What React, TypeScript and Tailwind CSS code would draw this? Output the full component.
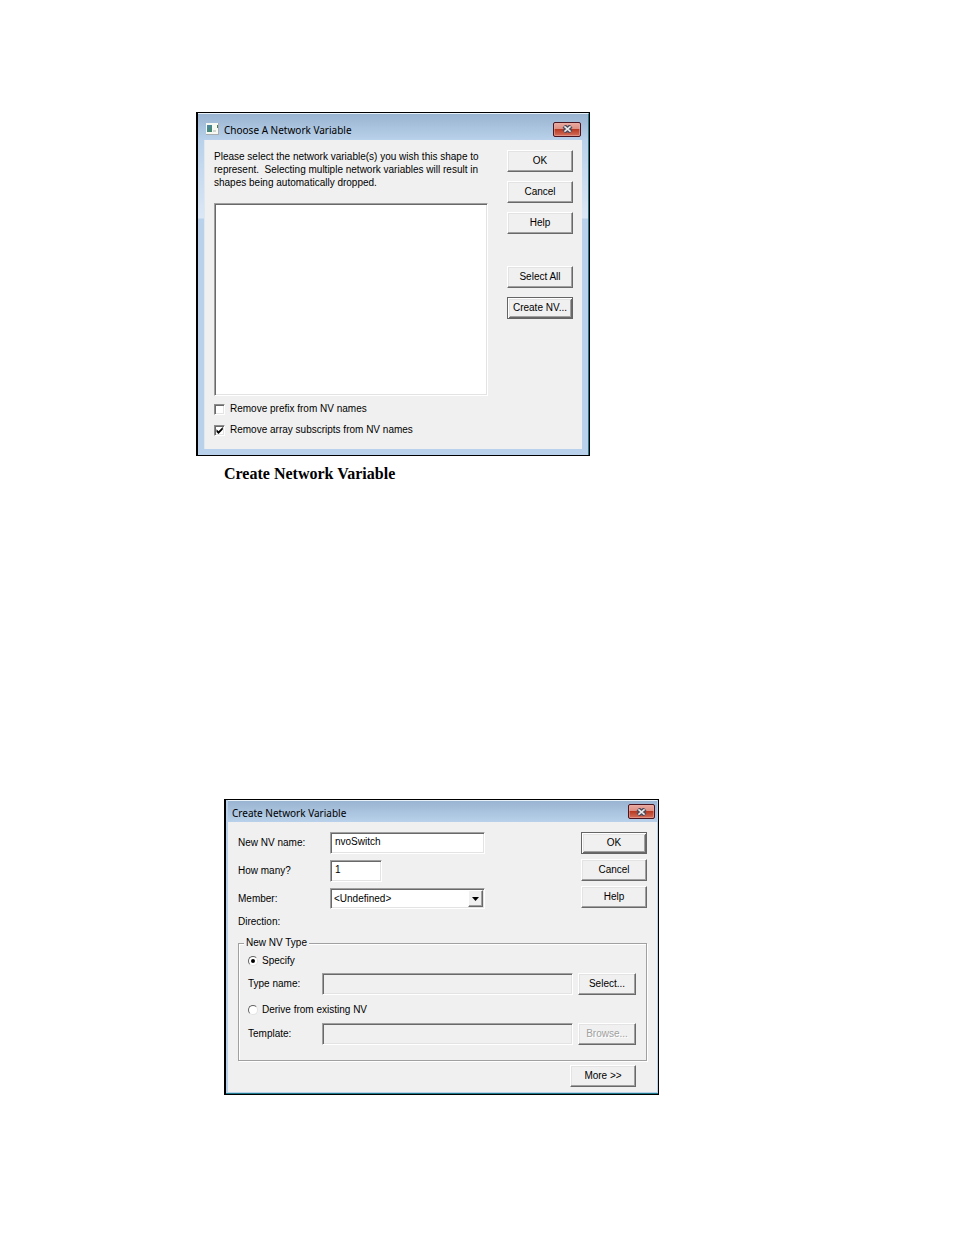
import React from "react";

interface DialogButtonProps {
  children: React.ReactNode;
  isDefault?: boolean;
  disabled?: boolean;
  className?: string;
}

function DialogButton({ children, isDefault, disabled, className = "w-[66px]" }: DialogButtonProps) {
  const bevel = isDefault
    ? "border-[#646464] shadow-[inset_1px_1px_#ffffff,inset_-1px_-1px_#696969,inset_2px_2px_#e3e3e3,inset_-2px_-2px_#a0a0a0]"
    : "border-t-white border-l-white border-r-[#696969] border-b-[#696969] shadow-[inset_-1px_-1px_#a0a0a0,inset_1px_1px_#e3e3e3]";
  return (
    <button
      type="button"
      disabled={disabled}
      className={`h-[22px] shrink-0 border bg-[#f0f0f0] text-center leading-5 disabled:text-[#a0a0a0] disabled:[text-shadow:1px_1px_#ffffff] ${bevel} ${className}`}
    >
      {children}
    </button>
  );
}

function CloseButton({ className }: { className: string }) {
  return (
    <button
      type="button"
      aria-label="Close"
      className={`flex h-[15px] shrink-0 items-center justify-center rounded-xs border border-[#4a1420] bg-[linear-gradient(#eaa99f,#dd8f83_45%,#b83a22_50%,#d4705c)] shadow-[inset_0_0_0_1px_#e9b0a688] ${className}`}
    >
      <svg width="11" height="8" viewBox="0 0 11 8">
        <path d="M2 1 L9 7 M9 1 L2 7" stroke="#4d4a5c" strokeWidth="4.4" />
        <path d="M2.4 1.4 L8.6 6.6 M8.6 1.4 L2.4 6.6" stroke="#ececec" strokeWidth="1.6" />
      </svg>
    </button>
  );
}

interface CheckOptionProps {
  id: string;
  label: string;
  defaultChecked?: boolean;
}

function CheckOption({ id, label, defaultChecked }: CheckOptionProps) {
  return (
    <div className="flex h-3 items-center gap-[5px]">
      <span className="relative flex">
        <input
          id={id}
          type="checkbox"
          defaultChecked={defaultChecked}
          className="peer size-[11px] appearance-none border border-t-[#8c8c8c] border-r-white border-b-white border-l-[#8c8c8c] bg-white shadow-[inset_1px_1px_#696969,inset_-1px_-1px_#e3e3e3]"
        />
        <svg
          className="pointer-events-none absolute inset-0 hidden peer-checked:block"
          width="11"
          height="11"
          viewBox="0 0 11 11"
        >
          <path d="M2.5 4.2 L4.5 6.2 L8.8 2 V4.6 L4.5 8.9 L2.5 6.9 Z" fill="#000000" />
        </svg>
      </span>
      <label htmlFor={id}>{label}</label>
    </div>
  );
}

function RadioOption({ id, label, defaultChecked }: CheckOptionProps) {
  return (
    <div className="flex h-3 items-center gap-1">
      <input
        id={id}
        type="radio"
        name="nv-type"
        defaultChecked={defaultChecked}
        className="flex size-[10px] appearance-none items-center justify-center rounded-full border border-t-[#606060] border-r-[#e3e3e3] border-b-[#e3e3e3] border-l-[#606060] bg-white before:hidden before:size-[4px] before:rounded-full before:bg-black before:content-[''] checked:before:block"
      />
      <label htmlFor={id}>{label}</label>
    </div>
  );
}

const sunken =
  "border border-t-[#a0a0a0] border-r-white border-b-white border-l-[#a0a0a0] shadow-[inset_1px_1px_#696969,inset_-1px_-1px_#e3e3e3]";

function ChooseVariableDialog() {
  return (
    <section className="w-full max-w-[394px] border border-l-2 border-black">
      <div className="border-t border-r border-t-[#e8f0f8] border-r-[#1c7a8c] bg-[linear-gradient(#99b4d1,#b9d1ea_26px,#dbe7f5_104px,#b9d1ea_105px)] pb-[6px]">
        <header className="flex h-[26px] items-center pt-1 pr-[7px] pl-2">
          <svg width="13" height="12" viewBox="0 0 13 12">
            <defs>
              <linearGradient id="app-icon" x1="0" y1="0" x2="1" y2="1">
                <stop offset="0" stopColor="#4f86b4" />
                <stop offset="1" stopColor="#3f8a5c" />
              </linearGradient>
            </defs>
            <rect width="13" height="12" fill="#a9adb0" />
            <rect width="12" height="11" fill="#f8f8f2" />
            <rect x="1" y="2" width="5" height="7" fill="url(#app-icon)" />
            <rect x="7" y="7" width="3" height="2" fill="#d2d6d2" />
            <rect x="11" y="2" width="1" height="3" fill="#4a7a5a" />
          </svg>
          <h2 className="flex-1 pt-px pl-[5px] font-['Noto_Sans',sans-serif]">Choose A Network Variable</h2>
          <CloseButton className="w-7" />
        </header>
        <div className="mx-[6px] flex gap-[19px] border-l border-l-[#dfe8f2] bg-[#f0f0f0] pt-[10px] pr-[9px] pb-[13px] pl-[9px]">
          <div className="flex flex-1 flex-col">
            <p className="leading-[13px]">
              Please select the network variable(s) you wish this shape to
              <br />
              represent.&nbsp; Selecting multiple network variables will result in
              <br />
              shapes being automatically dropped.
            </p>
            <div role="listbox" aria-label="Network variables" className={`mt-[14px] h-[193px] bg-white ${sunken}`} />
            <div className="mt-[7px] flex flex-col gap-[9px]">
              <CheckOption id="remove-prefix" label="Remove prefix from NV names" />
              <CheckOption id="remove-subscripts" label="Remove array subscripts from NV names" defaultChecked />
            </div>
          </div>
          <div className="flex flex-col gap-[9px]">
            <DialogButton>OK</DialogButton>
            <DialogButton>Cancel</DialogButton>
            <DialogButton>Help</DialogButton>
            <div className="mt-[23px] flex flex-col gap-[9px]">
              <DialogButton>Select All</DialogButton>
              <DialogButton isDefault>Create NV...</DialogButton>
            </div>
          </div>
        </div>
      </div>
    </section>
  );
}

function CreateVariableDialog() {
  return (
    <section className="w-full max-w-[435px] border border-l-2 border-black">
      <div className="border-b border-b-[#1c7a8c]">
        <div className="border-r border-b border-l-2 border-[#b9d1ea] bg-[#f0f0f0]">
          <header className="flex h-[22px] items-center border-t border-t-[#e8f0f8] bg-linear-to-b from-[#99b4d1] to-[#b9d1ea] pr-[2px] pl-1">
            <h2 className="flex-1 pt-[3px] font-['Noto_Sans',sans-serif]">Create Network Variable</h2>
            <CloseButton className="w-[27px]" />
          </header>
          <div className="px-[10px] pt-[10px] pb-[5px]">
            <div className="flex justify-between">
              <div className="grid grid-cols-[92px_155px] items-center gap-y-[6px]">
                <label htmlFor="nv-name">New NV name:</label>
                <input id="nv-name" defaultValue="nvoSwitch" className={`h-[22px] bg-white px-1 pb-1 ${sunken}`} />
                <label htmlFor="nv-count">How many?</label>
                <input id="nv-count" defaultValue="1" className={`h-[22px] w-[52px] bg-white px-1 pb-1 ${sunken}`} />
                <label htmlFor="nv-member">Member:</label>
                <div className="relative flex">
                  <select id="nv-member" className={`h-[21px] w-full appearance-none bg-white px-[3px] ${sunken}`}>
                    <option>&lt;Undefined&gt;</option>
                  </select>
                  <span className="pointer-events-none absolute top-[2px] right-[2px] flex h-[17px] w-[15px] items-center justify-center border border-t-white border-r-[#696969] border-b-[#696969] border-l-white bg-[#f0f0f0] shadow-[inset_-1px_-1px_#a0a0a0]">
                    <svg width="7" height="4" viewBox="0 0 7 4">
                      <path d="M0 0 H7 L3.5 4 Z" fill="#000000" />
                    </svg>
                  </span>
                </div>
                <span className="leading-[14px]">Direction:</span>
              </div>
              <div className="flex flex-col gap-[5px]">
                <DialogButton isDefault>OK</DialogButton>
                <DialogButton>Cancel</DialogButton>
                <DialogButton>Help</DialogButton>
              </div>
            </div>

            <fieldset className="mt-[7px] border border-[#a0a0a0] pt-[5px] pr-[10px] pb-[15px] pl-[9px] shadow-[1px_1px_#ffffff,inset_1px_1px_#ffffff]">
              <legend className="-ml-1 bg-[#f0f0f0] px-[2px] leading-[14px]">New NV Type</legend>
              <RadioOption id="specify" label="Specify" defaultChecked />
              <div className="mt-[6px] flex items-center">
                <label htmlFor="type-name" className="w-[74px]">
                  Type name:
                </label>
                <input id="type-name" readOnly className={`mr-[5px] h-[22px] min-w-0 flex-1 bg-[#f0f0f0] px-1 ${sunken}`} />
                <DialogButton className="w-[58px]">Select...</DialogButton>
              </div>
              <div className="mt-[9px]">
                <RadioOption id="derive" label="Derive from existing NV" />
              </div>
              <div className="mt-[7px] flex items-center">
                <label htmlFor="template" className="w-[74px]">
                  Template:
                </label>
                <input id="template" readOnly className={`mr-[5px] h-[22px] min-w-0 flex-1 bg-[#f0f0f0] px-1 ${sunken}`} />
                <DialogButton disabled className="w-[58px]">
                  Browse...
                </DialogButton>
              </div>
            </fieldset>

            <div className="mt-1 flex justify-end pr-[11px]">
              <DialogButton>More &gt;&gt;</DialogButton>
            </div>
          </div>
        </div>
      </div>
    </section>
  );
}

export default function App() {
  return (
    <main className="min-h-screen bg-white pt-28 pb-[140px] pl-[196px] font-['Liberation_Sans',Arial,sans-serif] text-[10px] leading-3 text-black">
      <ChooseVariableDialog />
      <div className="pl-7">
        <h1 className="mt-2 mb-[315px] font-['Liberation_Serif',serif] text-base leading-5 font-bold">
          Create Network Variable
        </h1>
        <CreateVariableDialog />
      </div>
    </main>
  );
}
